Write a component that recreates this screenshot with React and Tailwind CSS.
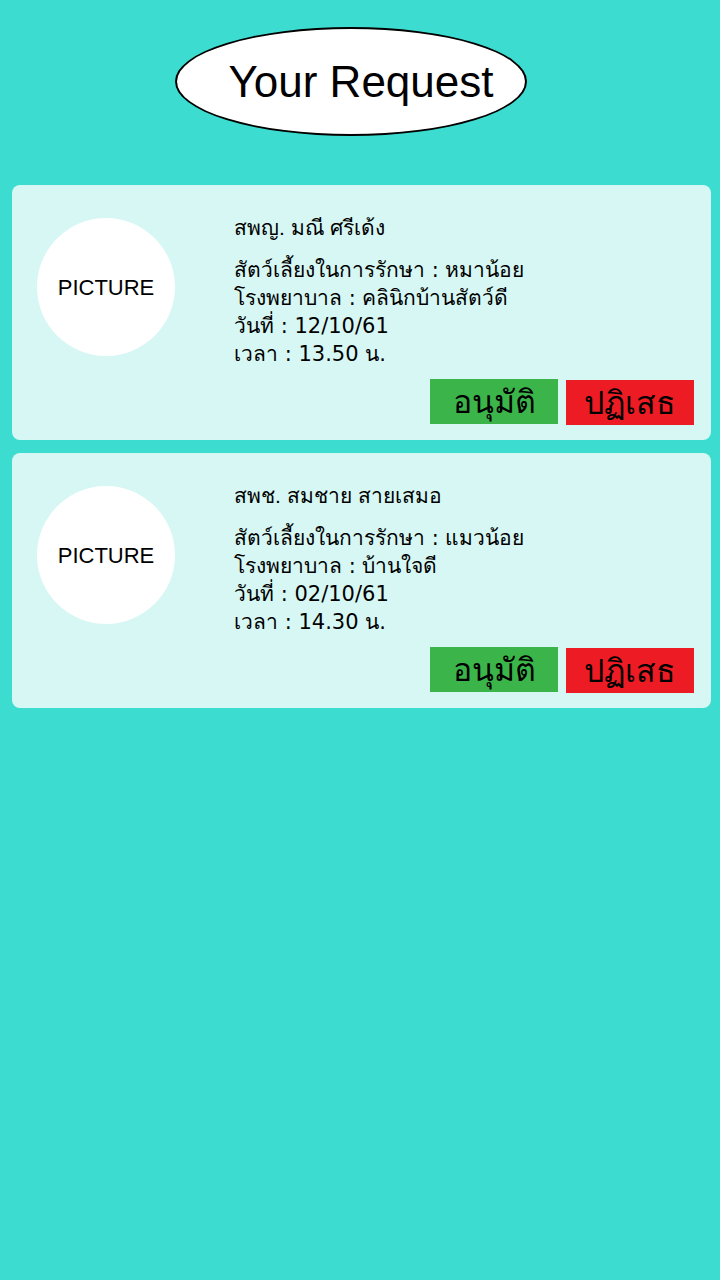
import React from 'react';

const requests = [
  {
    name: 'สพญ. มณี ศรีเด้ง',
    pet: 'หมาน้อย',
    hospital: 'คลินิกบ้านสัตว์ดี',
    date: '12/10/61',
    time: '13.50 น.',
  },
  {
    name: 'สพช. สมชาย สายเสมอ',
    pet: 'แมวน้อย',
    hospital: 'บ้านใจดี',
    date: '02/10/61',
    time: '14.30 น.',
  },
];

const RequestCard = ({ req }) => (
  <div className="flex h-[255px] rounded-[8px] bg-[#d6f7f4]">
    {/* Picture placeholder */}
    <div className="ml-[25px] mt-[33px] flex h-[138px] w-[138px] shrink-0 items-center justify-center rounded-full bg-white">
      <span className="text-[22px] text-black">PICTURE</span>
    </div>

    <div className="ml-[59px] flex flex-1 flex-col pt-[29px] pr-[17px] pb-[15px]">
      <div className="h-[28px] text-[21px] leading-[28px] text-black">{req.name}</div>
      <div className="mt-[14px] font-['DejaVu_Sans',sans-serif] text-[21px] leading-[28px] text-black">
        <div>สัตว์เลี้ยงในการรักษา : {req.pet}</div>
        <div>โรงพยาบาล : {req.hospital}</div>
        <div>วันที่ : {req.date}</div>
        <div>เวลา : {req.time}</div>
      </div>
      <div className="mt-auto flex justify-end gap-[8px]">
        <button className="flex h-[45px] w-[128px] items-center justify-center bg-[#3bb54a] text-[32px] text-black">
          อนุมัติ
        </button>
        <button className="mt-[1px] flex h-[45px] w-[128px] items-center justify-center bg-[#ed1c24] text-[32px] text-black">
          ปฏิเสธ
        </button>
      </div>
    </div>
  </div>
);

export default function App() {
  return (
    <div
      className="min-h-[1280px] w-[720px] bg-[#3cddd0]"
      style={{ fontFamily: '"Liberation Sans", "Noto Sans", sans-serif' }}
    >
      <div className="pt-[27px] pl-[175px]">
        <div className="flex h-[109px] w-[352px] items-center justify-center rounded-[50%] border-2 border-black bg-white pl-[20px]">
          <span className="text-[44px] leading-none text-black">Your Request</span>
        </div>
      </div>

      <div className="mt-[49px] flex flex-col gap-[13px] pl-[12px] pr-[9px]">
        {requests.map((req, i) => (
          <RequestCard key={i} req={req} />
        ))}
      </div>
    </div>
  );
}
